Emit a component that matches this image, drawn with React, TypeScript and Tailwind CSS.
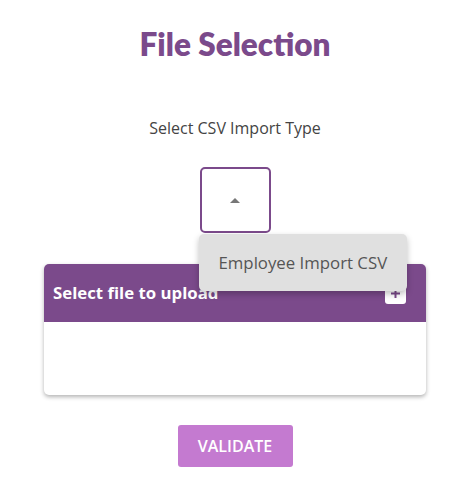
import React from 'react'

const purple = 'bg-[#7b4a8b]'

function PlusBox() {
  return (
    <div className="flex h-[21px] w-[21px] items-center justify-center rounded-[3px] bg-white">
      <svg width="11" height="11" viewBox="0 0 11 11">
        <path d="M5.5 1v9M1 5.5h9" stroke="#7b4a8b" strokeWidth="2" />
      </svg>
    </div>
  )
}

export default function App() {
  return (
    <div
      className="flex min-h-[477px] w-full flex-col items-center bg-white pl-[13px]"
      style={{ fontFamily: '"Open Sans", "Noto Sans", sans-serif' }}
    >
      <h1
        className="mt-[25px] text-[31.5px] leading-[38px] font-extrabold text-[#7b4a8b]"
        style={{ fontFamily: 'Lato, "Open Sans", sans-serif' }}
      >
        File Selection
      </h1>

      <p className="mt-[54px] text-[16px] leading-[22px] text-[#444]">Select CSV Import Type</p>

      <div className="relative mt-[28px]">
        <button className="flex h-[66px] w-[71px] items-center justify-center rounded-[5px] border-2 border-[#7b4a8b] bg-white">
          <svg width="10" height="5" viewBox="0 0 10 5" className="mt-[1px]">
            <path d="M0 5L5 0L10 5Z" fill="#777" />
          </svg>
        </button>

        <div className="absolute top-[67px] left-[-1px] z-10 flex h-[57px] w-[208px] items-center rounded-[5px] bg-[#e0e0e0] pl-[20px] shadow-[0_3px_6px_rgba(0,0,0,0.25)]">
          <span className="text-[16.8px] leading-[22px] text-[#555]">Employee Import CSV</span>
        </div>
      </div>

      <div className="mt-[31px] w-[382px] overflow-hidden rounded-[5px] bg-white shadow-[0_2px_4px_rgba(0,0,0,0.3)]">
        <div className={`${purple} flex h-[58px] items-center justify-between pr-[20px] pl-[9px]`}>
          <span className="text-[16.8px] font-bold text-white">Select file to upload</span>
          <PlusBox />
        </div>
        <div className="h-[73px]" />
      </div>

      <button className="mt-[30px] flex h-[42px] w-[115px] items-center justify-center rounded-[3px] bg-[#c47ad0] text-[16px] font-semibold text-white">
        VALIDATE
      </button>
    </div>
  )
}
